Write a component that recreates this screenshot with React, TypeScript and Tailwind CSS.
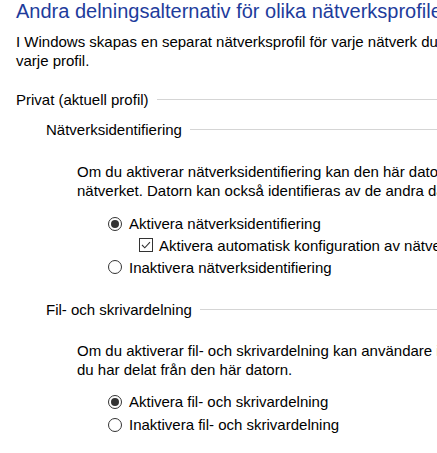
function Radio({ checked }: { checked?: boolean }) {
  return (
    <span className="flex h-[14px] w-[14px] shrink-0 items-center justify-center rounded-full border border-[#333]">
      {checked && <span className="h-[8px] w-[8px] rounded-full bg-[#333]" />}
    </span>
  );
}

function Check() {
  return (
    <span className="flex h-[14px] w-[14px] shrink-0 items-center justify-center border border-[#333]">
      <svg width="10" height="8" viewBox="0 0 10 8" fill="none">
        <path d="M1 4 L3.8 6.8 L9 1.2" stroke="#333" strokeWidth="1.1" />
      </svg>
    </span>
  );
}

function Heading({ label, className }: { label: string; className?: string }) {
  return (
    <div className={"flex items-center gap-[8px] " + (className ?? "")}>
      <span>{label}</span>
      <div className="h-px flex-1 bg-[#d5d5d5]" />
    </div>
  );
}

export default function App() {
  return (
    <div
      className="h-[453px] w-[437px] overflow-hidden whitespace-nowrap bg-white pl-4 text-[15px] leading-[19px] text-black"
      style={{ fontFamily: '"Liberation Sans", Arial, sans-serif' }}
    >
      <h1 className="-mt-[1px] text-[20px] leading-[24px] text-[#1e3c9c]">
        Andra delningsalternativ för olika nätverksprofiler
      </h1>

      <p className="mt-[9px]">
        I Windows skapas en separat nätverksprofil för varje nätverk du använder. Du kan välja specifika alternativ för
        <br />
        varje profil.
      </p>

      <Heading label="Privat (aktuell profil)" className="mt-[20px]" />

      <div className="pl-[30px]">
        <Heading label="Nätverksidentifiering" className="mt-[11px]" />

        <div className="pl-[31px]">
          <p className="mt-[23px]">
            Om du aktiverar nätverksidentifiering kan den här datorn se andra datorer och enheter i
            <br />
            nätverket. Datorn kan också identifieras av de andra datorerna i nätverket.
          </p>

          <div className="mt-[13px] flex flex-col pl-[31px]">
            <label className="flex h-[21px] items-center gap-[7px]">
              <Radio checked />
              <span>Aktivera nätverksidentifiering</span>
            </label>
            <label className="flex h-[22px] items-center gap-[6px] pl-[31px]">
              <Check />
              <span>Aktivera automatisk konfiguration av nätverksanslutna enheter.</span>
            </label>
            <label className="flex h-[22px] items-center gap-[7px]">
              <Radio />
              <span>Inaktivera nätverksidentifiering</span>
            </label>
          </div>
        </div>

        <Heading label="Fil- och skrivardelning" className="mt-[22px]" />

        <div className="pl-[31px]">
          <p className="mt-[22px]">
            Om du aktiverar fil- och skrivardelning kan användare i nätverket komma åt filer och skrivare som
            <br />
            du har delat från den här datorn.
          </p>

          <div className="mt-[11px] flex flex-col pl-[31px]">
            <label className="flex h-[23px] items-center gap-[7px]">
              <Radio checked />
              <span>Aktivera fil- och skrivardelning</span>
            </label>
            <label className="flex h-[23px] items-center gap-[7px]">
              <Radio />
              <span>Inaktivera fil- och skrivardelning</span>
            </label>
          </div>
        </div>
      </div>
    </div>
  );
}
